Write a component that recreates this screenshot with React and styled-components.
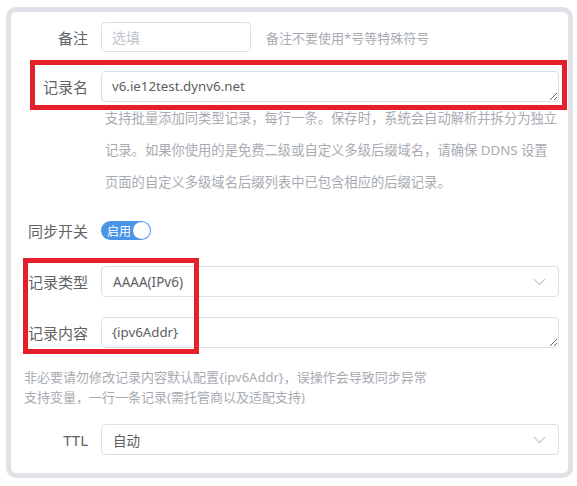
import React from "react";
import styled, { createGlobalStyle } from "styled-components";

const GlobalStyle = createGlobalStyle`
  body {
    margin: 0;
    background: #ffffff;
    font-family: "Noto Sans", "Noto Sans CJK SC", sans-serif;
  }
`;

const Panel = styled.div`
  position: relative;
  box-sizing: border-box;
  width: 567px;
  margin: 7px 0 0 6px;
  padding: 10px 9px 18px 0;
  border: 5px solid #e1e2e7;
  border-radius: 10px;
  background: #ffffff;
`;

const Row = styled.div`
  display: flex;
  align-items: center;
  margin-top: ${(p) => p.gap || 0}px;
`;

const Label = styled.label`
  box-sizing: border-box;
  width: 90px;
  flex: none;
  padding-right: 13px;
  text-align: right;
  font-size: 15px;
  color: #606266;
`;

const Input = styled.input`
  box-sizing: border-box;
  width: ${(p) => (p.narrow ? "150px" : "100%")};
  height: 30px;
  padding: 0 10px;
  border: 1px solid #dcdfe6;
  border-radius: 4px;
  font-family: inherit;
  font-size: 14px;
  color: #606266;
  outline: none;
  &::placeholder {
    color: #c0c4cc;
  }
`;

const Area = styled.textarea`
  box-sizing: border-box;
  flex: 1;
  height: 31px;
  padding: 4px 10px;
  border: 1px solid #dcdfe6;
  border-radius: 4px;
  font-family: inherit;
  font-size: 13.3px;
  line-height: 21px;
  color: #5c5e63;
  outline: none;
  resize: vertical;
`;

const Hint = styled.span`
  margin-left: 15px;
  font-size: 13px;
  color: #a8abb2;
`;

const Help = styled.div`
  padding-left: ${(p) => p.indent}px;
  font-size: ${(p) => p.size || 13}px;
  line-height: ${(p) => p.lh}px;
  color: #a8abb2;
`;

const Switch = styled.div`
  display: flex;
  align-items: center;
  justify-content: space-between;
  box-sizing: border-box;
  width: 50px;
  height: 19px;
  padding: 0 1px 0 6px;
  border-radius: 10px;
  background: #4a95e8;
  color: #ffffff;
  font-size: 12px;
`;

const Knob = styled.span`
  width: 17px;
  height: 17px;
  border-radius: 50%;
  background: #ffffff;
`;

const Select = styled.div`
  display: flex;
  align-items: center;
  justify-content: space-between;
  box-sizing: border-box;
  flex: 1;
  height: 31px;
  padding: 0 12px 0 11px;
  border: 1px solid #dcdfe6;
  border-radius: 4px;
  font-size: 13.5px;
  color: #5c5e63;
`;

const Mark = styled.div`
  position: absolute;
  box-sizing: border-box;
  border: 5px solid #e5202b;
  pointer-events: none;
`;

function Chevron() {
  return (
    <svg width="13" height="8" viewBox="0 0 13 8">
      <path d="M1 1.2 L6.5 6.5 L12 1.2" fill="none" stroke="#c0c4cc" strokeWidth="1.1" />
    </svg>
  );
}

export default function App() {
  return (
    <>
      <GlobalStyle />
      <Panel>
        <Row>
          <Label>备注</Label>
          <Input narrow placeholder="选填" readOnly />
          <Hint>备注不要使用*号等特殊符号</Hint>
        </Row>
        <Row gap={19}>
          <Label>记录名</Label>
          <Area value="v6.ie12test.dynv6.net" readOnly />
        </Row>
        <Help indent={94} lh={32} size={13.3}>
          支持批量添加同类型记录，每行一条。保存时，系统会自动解析并拆分为独立
          <br />
          记录。如果你使用的是免费二级或自定义多级后缀域名，请确保 DDNS 设置
          <br />
          页面的自定义多级域名后缀列表中已包含相应的后缀记录。
        </Help>
        <Row gap={22}>
          <Label>同步开关</Label>
          <Switch>
            启用
            <Knob />
          </Switch>
        </Row>
        <Row gap={25}>
          <Label>记录类型</Label>
          <Select>
            AAAA(IPv6)
            <Chevron />
          </Select>
        </Row>
        <Row gap={20}>
          <Label>记录内容</Label>
          <Area value="{ipv6Addr}" readOnly />
        </Row>
        <Help indent={13} lh={20} style={{ marginTop: 19 }}>
          非必要请勿修改记录内容默认配置{"{ipv6Addr}"}，误操作会导致同步异常
          <br />
          支持变量，一行一条记录(需托管商以及适配支持)
        </Help>
        <Row gap={17}>
          <Label>TTL</Label>
          <Select>
            自动
            <Chevron />
          </Select>
        </Row>
        <Mark style={{ left: 19, top: 48, width: 537, height: 50 }} />
        <Mark style={{ left: 12, top: 246, width: 176, height: 96 }} />
      </Panel>
    </>
  );
}
